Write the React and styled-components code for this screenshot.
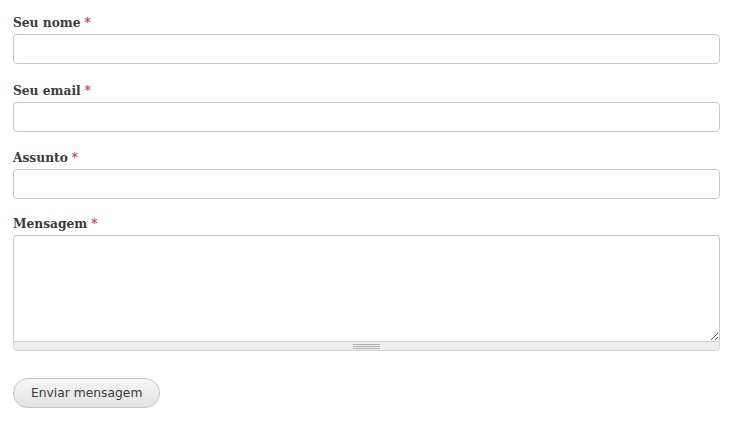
import React from 'react'
import styled, { createGlobalStyle } from 'styled-components'

const GlobalStyle = createGlobalStyle`
  body {
    margin: 0;
    background: #fff;
    font-family: "Liberation Serif", serif;
    color: #3b3b3b;
  }
`

const Form = styled.form`
  padding: 12px 16px 0 13px;
  display: flex;
  flex-direction: column;
`

const Item = styled.div`
  display: flex;
  flex-direction: column;
  margin-bottom: ${(p) => p.$mb || 16}px;
`

const Label = styled.label`
  font-family: "DejaVu Serif Condensed", "DejaVu Serif", Georgia, serif;
  font-weight: bold;
  font-size: 13.6px;
  line-height: 19.5px;
  padding-top: 1px;
  margin-bottom: 1.5px;
  color: #3b3b3b;
`

const Req = styled.span`
  color: #ee0044;
  font-weight: normal;
  margin-left: 4px;
`

const Input = styled.input`
  box-sizing: border-box;
  height: 30px;
  width: 100%;
  border: 1px solid #c8c8c8;
  border-radius: 4px;
  padding: 4px 6px;
  font-size: 14px;
  background: #fff;
  outline: none;
`

const AreaWrap = styled.div`
  display: flex;
  flex-direction: column;
`

const TextArea = styled.textarea`
  box-sizing: border-box;
  height: 106px;
  width: 100%;
  border: 1px solid #c8c8c8;
  border-bottom: none;
  border-radius: 4px 4px 0 0;
  padding: 4px 6px;
  resize: vertical;
  font-size: 14px;
  outline: none;
  display: block;
`

const Grippie = styled.div`
  box-sizing: border-box;
  height: 10px;
  background: #eeeeee;
  border: 1px solid #d4d4d4;
  border-radius: 0 0 4px 4px;
  display: flex;
  align-items: center;
  justify-content: center;
`

const GripLines = styled.div`
  width: 27px;
  height: 5px;
  border-top: 1px solid #b0b0b0;
  border-bottom: 1px solid #b0b0b0;
  box-sizing: border-box;
  position: relative;
  &::after {
    content: '';
    position: absolute;
    left: 0;
    right: 0;
    top: 1px;
    border-top: 1px solid #b0b0b0;
  }
`

const Actions = styled.div`
  margin-top: 11px;
`

const Button = styled.button`
  height: 30px;
  padding: 0 17px;
  border: 1px solid #c6c6c6;
  border-radius: 16px;
  background: linear-gradient(#f6f6f6, #e3e3e3);
  font-family: "DejaVu Sans", Verdana, sans-serif;
  font-size: 12.3px;
  color: #3a3a3a;
  box-shadow: 0 1px 1px rgba(0, 0, 0, 0.08);
`

const fields = ['Seu nome', 'Seu email', 'Assunto']

export default function App() {
  return (
    <>
      <GlobalStyle />
      <Form>
        {fields.map((f, i) => (
          <Item key={f} $mb={i === 1 ? 15 : i === 2 ? 14 : 16}>
            <Label>
              {f}
              <Req>*</Req>
            </Label>
            <Input type="text" />
          </Item>
        ))}
        <Item>
          <Label>
            Mensagem
            <Req>*</Req>
          </Label>
          <AreaWrap>
            <TextArea />
            <Grippie>
              <GripLines />
            </Grippie>
          </AreaWrap>
        </Item>
        <Actions>
          <Button type="button">Enviar mensagem</Button>
        </Actions>
      </Form>
    </>
  )
}
